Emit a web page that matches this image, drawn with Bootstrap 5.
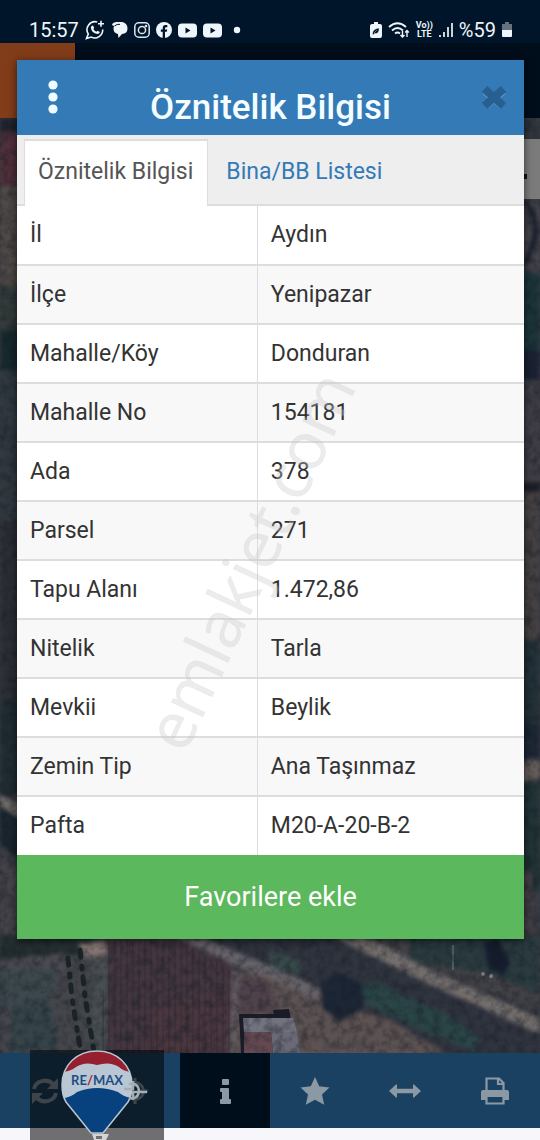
<!DOCTYPE html>
<html lang="tr">
<head>
<meta charset="utf-8">
<meta name="viewport" content="width=device-width, initial-scale=1">
<title>Öznitelik Bilgisi</title>
<link href="https://cdn.jsdelivr.net/npm/bootstrap@5.3.0/dist/css/bootstrap.min.css" rel="stylesheet">
<style>
  body { font-family: Roboto, "Noto Sans", sans-serif; font-size: 23px; line-height: 34px; color: #333; background: #2d333b; }
  .backdrop-map { z-index: -1; }
  .screen { z-index: 0; }
  .status { height: 43px; padding: 17px 28px 0 29px; color: #eef5fb; font-size: 20px; line-height: 26px; }
  .status svg { display: block; flex: none; }
  .status-left, .status-right { gap: 6px; }
  .volte { font-size: 9px; line-height: 9px; font-weight: 700; }
  .panel { margin: 17px 16px 0 17px; box-shadow: 0 2px 8px rgba(0,0,0,.6); background: #fff; }
  .panel-top { background: #337ab7; height: 75px; padding: 0 16px 0 28px; color: #f4fdff; }
  .panel-top h1 { font-size: 35px; line-height: 40px; font-weight: 500; padding-top: 20px; }
  .tool { background: none; border: 0; padding: 0; line-height: 0; }
  .tabs { background: #eee; border-bottom: 2px solid #ddd; padding: 4px 7px 0; }
  .tabs .nav-link { color: #337ab7; border: 1px solid transparent; border-width: 2px 1px 0; border-radius: 0; padding: 14px 14px 15px 13px; margin-bottom: -2px; }
  .tabs .nav-link.active { color: #555; background: #fff; border-color: #ddd; padding-bottom: 17px; }
  .tabs .nav-item + .nav-item { margin-left: 4px; }
  .attrs { --bs-table-color: #333; --bs-table-bg: #fff; color: #333; table-layout: fixed; }
  .attrs th, .attrs td { font-weight: 400; padding: 12px 13px 11px; height: 59px; border-bottom: 2px solid #ddd; }
  .attrs tr:last-child > * { border-bottom: 0; }
  .attrs th { width: 47.4%; border-right: 1px solid #ddd; }
  .attrs tr:nth-child(even) > * { background: #f8f8f8; }
  .favorite { background: #5cb85c; color: #fff; font-size: 27px; line-height: 36px; border: 0; padding: 24px; }
  .toolbar a { height: 75px; background: #1b4162; color: #8b99a5; }
  .toolbar a.current { background: #000d1a; }
  .homebar { height: 12px; background: #f7f7fb; }
  .agency { left: 30px; bottom: 0; width: 134px; height: 90px; background: rgba(0,0,0,.55); }
  .stamp { pointer-events: none; }
  .stamp text { font-family: "Open Sans", "Noto Sans", sans-serif; }
</style>
<script src="https://cdn.jsdelivr.net/npm/bootstrap@5.3.0/dist/js/bootstrap.bundle.min.js"></script>
</head>
<body>
<div class="screen position-relative d-flex flex-column min-vh-100 overflow-hidden">

  <!-- dimmed aerial map with the site's header over it -->
  <svg class="backdrop-map position-absolute top-0 start-0 w-100 h-100" viewBox="0 0 540 1140" preserveAspectRatio="xMidYMax slice" aria-hidden="true">
    <defs>
      <pattern id="rows" width="6" height="8" patternUnits="userSpaceOnUse"><rect width="2" height="8" fill="#2c2434" opacity=".3"/></pattern>
      <filter id="grain" x="0" y="0" width="100%" height="100%" color-interpolation-filters="sRGB"><feTurbulence type="fractalNoise" baseFrequency=".12" numOctaves="4" seed="4"/><feColorMatrix values="0 0 0 0 0.07  0 0 0 0 0.1  0 0 0 0 0.13  1.6 0 0 0 -.6"/></filter>
      <filter id="soft" color-interpolation-filters="sRGB"><feGaussianBlur stdDeviation="2"/></filter>
    </defs>
    <rect width="540" height="1140" fill="#3b3c44"/>
    <g filter="url(#soft)">
      <!-- left edge -->
      <path d="M0 118h20v68H0z" fill="#50303a"/><path d="M0 118h20v14H0z" fill="#20242c"/>
      <path d="M0 186h20v100H0z" fill="#504a47"/><path d="M0 286h20v70H0z" fill="#343b3a"/>
      <path d="M0 330h20v40H0z" fill="#172a2d"/><path d="M0 370h20v150H0z" fill="#30393f"/>
      <path d="M0 520h20v180H0z" fill="#2b2e35"/><path d="M0 700h20v95H0z" fill="#202c33"/>
      <path d="M0 795l20 10v14L0 806z" fill="#77706d"/><path d="M0 806l20 13v40L0 845z" fill="#1a272f"/>
      <path d="M0 858l20 12v80H0z" fill="#45434a"/>
      <!-- right edge -->
      <path d="M520 118h20v22h-20z" fill="#30363c"/><path d="M520 198h20v75h-20z" fill="#45444b"/>
      <path d="M524 200q16 20 10 40t-10 25" fill="none" stroke="#161d29" stroke-width="5"/>
      <path d="M520 273h20v80h-20z" fill="#1b3539"/><path d="M520 350h20v30h-20z" fill="#1b2235"/>
      <path d="M520 380h20v100h-20z" fill="#403e46"/><path d="M520 480h20v180h-20z" fill="#464142"/>
      <path d="M520 482h20v10h-20z" fill="#202027"/><path d="M520 640h20v100h-20z" fill="#233238"/>
      <path d="M520 725h20v40h-20z" fill="#1d2736"/><path d="M520 762l20-4v20l-20 4z" fill="#665d59"/>
      <path d="M520 782h20v110h-20z" fill="#213436"/><path d="M520 870h12v70h-12z" fill="#453f46"/>
      <!-- lower fields -->
      <path d="M0 930h110v130H0z" fill="#44464b"/>
      <path d="M0 935h100v18L0 962z" fill="#252f31"/>
      <path d="M0 960l65-8v20L0 985z" fill="#4a4a50"/>
      <path d="M0 968l58 2-6 30-52 10z" fill="#3d484d"/>
      <path d="M12 1004l36-6 12 58H10z" fill="#36444a"/>
      <path d="M98 935h90l48 34-2 84H96z" fill="#44363f"/>
      <path d="M150 1010l80-20v68h-85z" fill="#4a363e"/>
      <path d="M95 958l14-4-2 98H91z" fill="#494f51"/>
      <path d="M78 944l26-4 4 13-22 5z" fill="#867775"/>
      <path d="M190 935h150l200 96v30h-90l-90-60-60-15z" fill="#30343e"/>
      <path d="M232 973l40-2 60 30 60 20 70 42H230z" fill="#5d5252"/>
      <path d="M236 978l30 0 12 36-44-2z" fill="#50424b"/>
      <path d="M232 968l8 4-5 81h-6z" fill="#645c62"/>
      <path d="M350 936h190v74z" fill="#414146"/>
      <path d="M410 936h130v58l-50-20-80-12z" fill="#2a3b3f"/>
      <path d="M362 985q15-10 34 8l48 20 36 26-6 12-52-20-58-28z" fill="#2b4547"/>
      <path d="M322 988q2-15 20-14l20 10 2 24-24 14-18-14z" fill="#1d2635"/>
      <path d="M270 950l28 10 4 14-32-6z" fill="#384b4b"/>
      <path d="M484 944l14-6 12 24-6 14-16-8z" fill="#151d2e"/>
      <path d="M174 936h24l72 30 50 22v12l-50-22-34-12z" fill="#68636a"/>
      <path d="M332 936h34l64 34 110 48v16l-120-54z" fill="#736d6c"/>
    </g>
    <path d="M108 940h74l50 32-2 81H98z" fill="url(#rows)"/>
    <g stroke="#142024" stroke-width="5" stroke-linecap="round" stroke-dasharray="7 9 3 8" fill="none" opacity=".85"><path d="M68 958l4 40 9 56"/><path d="M80 950l5 46 9 56"/></g>
    <path d="M239 1014h35l-1-4 16-1 8 44h-56z" fill="#1b1c27"/><path d="M243 1018h50l4 14h-53z" fill="#73737f"/><path d="M244 1032h27l2 21h-29z" fill="#654952"/><path d="M271 1032h26l3 21h-27z" fill="#6b6977"/>
    <path d="M453 945v25" stroke="#777c82" stroke-width="2" opacity=".5"/><circle cx="483" cy="974" r="2" fill="#808285"/><circle cx="491" cy="976" r="2" fill="#808285"/>
    <rect y="118" width="540" height="940" filter="url(#grain)" opacity=".55"/>
    <rect width="540" height="43" fill="#001529"/>
    <rect y="43" width="540" height="75" fill="#000d1b"/>
    <rect y="43" width="75" height="75" fill="#813c19"/>
    <rect x="520" y="139" width="20" height="60" fill="#7b7b7b"/><rect x="522" y="174" width="5" height="5" fill="#111"/>
  </svg>

  <header class="status d-flex justify-content-between">
    <div class="status-left d-flex align-items-center">
      <span>15:57</span>
      <svg width="20" height="20" viewBox="0 0 20 20" fill="none" stroke="#eef5fb" stroke-width="1.6" aria-hidden="true"><path d="M12.2 2A8 8 0 0 0 3.300 14L1.500 18.500l4.700-1.400A8 8 0 0 0 17.700 9.500M16 .8v6M13 3.800h6"/><path d="M6.500 6l1.500-.6 1.200 2.400-.8 1.200q1 2 3 2.800l1.100-1.100 2.400 1.200q-.5 2-2.400 2.200-6-1-6.700-6.600z" fill="#eef5fb" stroke="none"/></svg>
      <svg width="17" height="20" viewBox="0 0 17 20" aria-hidden="true"><path d="M1 4.500Q2 2 6 2h5q5.500 1 5.500 6.500 0 5-5.500 5.500L7.500 18l-.6-4Q2.500 13 2.500 8.500q0-1.500.7-2.800Q1.500 6 1 4.500z" fill="#eef5fb"/><path d="M3.500 6Q6 3.800 9 4.300" stroke="#001529" fill="none"/></svg>
      <svg width="16" height="16" viewBox="0 0 16 16" fill="none" stroke="#dde7ee" stroke-width="1.500" aria-hidden="true"><rect x=".8" y=".8" width="14.400" height="14.400" rx="4"/><circle cx="8" cy="8" r="3.600"/><circle cx="12" cy="4" r=".6"/></svg>
      <svg width="16" height="16" viewBox="0 0 16 16" aria-hidden="true"><circle cx="8" cy="8" r="8" fill="#eef5fb"/><path d="M6.700 16V9.800H4.800V7.500h1.900V5.900q0-2.900 2.900-2.900h1.700v2.200H10q-1 0-1 1v1.300h2.200l-.4 2.300H9V16z" fill="#001529"/></svg>
      <svg width="19" height="15" viewBox="0 0 19 15" aria-hidden="true"><rect width="19" height="14" y=".5" rx="4" fill="#eef5fb"/><path d="M7.500 4.500l5 3-5 3z" fill="#001529"/></svg>
      <svg width="19" height="15" viewBox="0 0 19 15" aria-hidden="true"><rect width="19" height="14" y=".5" rx="4" fill="#eef5fb"/><path d="M7.500 4.500l5 3-5 3z" fill="#001529"/></svg>
      <svg width="20" height="8" viewBox="0 0 20 8" aria-hidden="true"><circle cx="9" cy="4" r="3.200" fill="#eef5fb"/></svg>
    </div>
    <div class="status-right d-flex align-items-center">
      <svg width="12" height="16" viewBox="0 0 12 16" aria-hidden="true"><path d="M4 0h4v2h2q2 0 2 2v10q0 2-2 2H2q-2 0-2-2V4q0-2 2-2h2z" fill="#eef5fb"/><path d="M2.500 12q0-5 6.500-6 .5 6-4.500 5.500L3 13zM4 11l3-3" fill="#001529" stroke="#eef5fb" stroke-width=".4"/></svg>
      <svg width="22" height="18" viewBox="0 0 22 18" fill="none" stroke="#eef5fb" stroke-width="1.800" aria-hidden="true"><path d="M1 6q8.500-7.500 17 0M4 9.500q5.500-5 11 0M7 12.500q2.500-2 5 0"/><path d="M14.500 10v6M12.500 14l2 2 2-2M19 16V9.500M17.200 11.500l1.800-2 1.800 2" stroke-width="1.400"/></svg>
      <span class="volte text-center">Vo))<br>LTE</span>
      <svg width="14" height="16" viewBox="0 0 14 16" aria-hidden="true"><path d="M0 13h2v2H0zM4 10h2v5H4zM8 5h2v10H8zM12 1h2v14h-2z" fill="#c9d3da"/></svg>
      <span>%59</span>
      <svg width="10" height="16" viewBox="0 0 10 16" aria-hidden="true"><path d="M3 0h4v2h3v6H0V2h3z" fill="#65717c"/><path d="M0 8h10v6q0 1-1 1H1q-1 0-1-1z" fill="#eef5fb"/></svg>
    </div>
  </header>

  <main class="panel position-relative">
    <div class="panel-top d-flex justify-content-between align-items-center">
      <button class="tool" type="button" aria-label="Menü"><svg width="16" height="36" viewBox="0 0 16 36" fill="#effcff"><circle cx="8" cy="5" r="4.600"/><circle cx="8" cy="17" r="4.600"/><circle cx="8" cy="29" r="4.600"/></svg></button>
      <h1 class="mb-0">Öznitelik Bilgisi</h1>
      <button class="tool" type="button" aria-label="Kapat"><svg width="28" height="28" viewBox="0 0 28 28" stroke-linejoin="round"><path d="M5 7l18 15M23 7L5 22" stroke="#5f9bc9" stroke-width="8"/><path d="M4.500 5l19 17M23.500 5l-19 17" stroke="#285f91" stroke-width="8"/></svg></button>
    </div>
    <ul class="tabs nav">
      <li class="nav-item"><a class="nav-link active" href="#attrs" aria-current="page">Öznitelik Bilgisi</a></li>
      <li class="nav-item"><a class="nav-link" href="#bb">Bina/BB Listesi</a></li>
    </ul>
    <table class="attrs table mb-0" id="attrs">
      <tbody>
        <tr><th scope="row">İl</th><td>Aydın</td></tr>
        <tr><th scope="row">İlçe</th><td>Yenipazar</td></tr>
        <tr><th scope="row">Mahalle/Köy</th><td>Donduran</td></tr>
        <tr><th scope="row">Mahalle No</th><td>154181</td></tr>
        <tr><th scope="row">Ada</th><td>378</td></tr>
        <tr><th scope="row">Parsel</th><td>271</td></tr>
        <tr><th scope="row">Tapu Alanı</th><td>1.472,86</td></tr>
        <tr><th scope="row">Nitelik</th><td>Tarla</td></tr>
        <tr><th scope="row">Mevkii</th><td>Beylik</td></tr>
        <tr><th scope="row">Zemin Tip</th><td>Ana Taşınmaz</td></tr>
        <tr><th scope="row">Pafta</th><td>M20-A-20-B-2</td></tr>
      </tbody>
    </table>
    <button class="favorite d-block w-100" type="button">Favorilere ekle</button>
    <svg class="stamp position-absolute top-0 start-0 w-100 h-100" viewBox="0 0 507 879" aria-hidden="true"><text transform="translate(168 695) rotate(-65)" font-size="65" fill="#c8c8c8" fill-opacity=".34" stroke="#c8c8c8" stroke-opacity=".1">emlakjet.com</text></svg>
  </main>

  <nav class="toolbar d-flex mt-auto" aria-label="Araçlar">
    <a class="col d-flex align-items-center justify-content-center" href="#yenile" aria-label="Yenile"><svg width="28" height="28" viewBox="0 0 28 28" fill="none" stroke="currentColor" stroke-width="4"><path d="M3 12A11 10 0 0 1 22 7M25 16A11 10 0 0 1 6 21"/><path d="M27 1v11H16zM1 27V16h11z" fill="currentColor" stroke="none"/></svg></a>
    <a class="col d-flex align-items-center justify-content-center" href="#konum" aria-label="Konum"><svg width="28" height="28" viewBox="0 0 28 28" fill="none" stroke="currentColor" stroke-width="3"><circle cx="14" cy="14" r="8.500"/><path d="M14 1v9M14 18v9M1 14h9M18 14h9"/></svg></a>
    <a class="current col d-flex align-items-center justify-content-center" href="#bilgi" aria-label="Bilgi"><svg width="28" height="28" viewBox="0 0 24 28" fill="currentColor"><path d="M10 2h5q1 0 1 1v4q0 1-1 1h-5q-1 0-1-1V3q0-1 1-1zM8 11h7q1 0 1 1v10h1q1 0 1 1v3q0 1-1 1H8q-1 0-1-1v-3q0-1 1-1h1v-7H8q-1 0-1-1v-2q0-1 1-1z"/></svg></a>
    <a class="col d-flex align-items-center justify-content-center" href="#favoriler" aria-label="Favoriler"><svg width="30" height="30" viewBox="0 0 30 30" fill="currentColor"><path d="M15 1l4.200 9.300L29.500 11.500l-7.500 7 2.200 10.300L15 23.700l-9.200 5.100L8 18.500l-7.500-7 10.300-1.200z"/></svg></a>
    <a class="col d-flex align-items-center justify-content-center" href="#olcum" aria-label="Ölçüm"><svg width="32" height="28" viewBox="0 0 32 28" fill="currentColor"><path d="M0 14l7-6.500h1v4.200h16V7.500h1l7 6.500-7 6.500h-1v-4.200H8v4.200H7z"/></svg></a>
    <a class="col d-flex align-items-center justify-content-center" href="#yazdir" aria-label="Yazdır"><svg width="30" height="28" viewBox="0 0 30 28"><path d="M3 13h24q2 0 2 2v8h-5v-3H6v3H1v-8q0-2 2-2z" fill="currentColor"/><path d="M6.500 15V1.500H19l4.500 4.500v9M6.500 20v6.500h17V20M18 1.500V7h5.500" fill="none" stroke="currentColor" stroke-width="2.200"/></svg></a>
  </nav>
  <div class="homebar"></div>

  <div class="agency position-absolute">
    <svg class="w-100 h-100" viewBox="0 0 134 90" role="img" aria-label="RE/MAX">
      <defs><clipPath id="envelope"><path d="M67 1C47 1 32 15 32 35c0 8 1 12 4 17l25 31h12l25-31c3-5 4-9 4-17C102 15 87 1 67 1z"/></clipPath></defs>
      <g clip-path="url(#envelope)"><path d="M30 0h74v90H30z" fill="#b9c6d3"/><path d="M30 0h74v22q-10 0-15-5-9-6-22-2-12-4-21 2-6 5-16 5z" fill="#94202f"/><path d="M30 49q12-2 17-7 20-8 41 0 6 5 16 7v41H30z" fill="#07427f"/></g>
      <path d="M67 1C47 1 32 15 32 35c0 8 1 12 4 17l25 31h12l25-31c3-5 4-9 4-17C102 15 87 1 67 1z" fill="none" stroke="#bac6d0" stroke-width="1.500"/>
      <path d="M62 84h17l-3 6H64zM66 86h6v3h-6z" fill="#d4d4d4" fill-rule="evenodd"/>
      <g fill="none" stroke="#a4aeb5" stroke-width="2.500"><path d="M103 31v8H94M103 50v-8h14M99 34q9-2 10 7-1 9-10 7"/></g>
      <text x="67" y="35" text-anchor="middle" font-family="Lato, sans-serif" font-weight="700" font-size="13" fill="#1d4e83">RE<tspan fill="#a5283a">/</tspan>MAX</text>
    </svg>
  </div>
</div>
</body>
</html>
